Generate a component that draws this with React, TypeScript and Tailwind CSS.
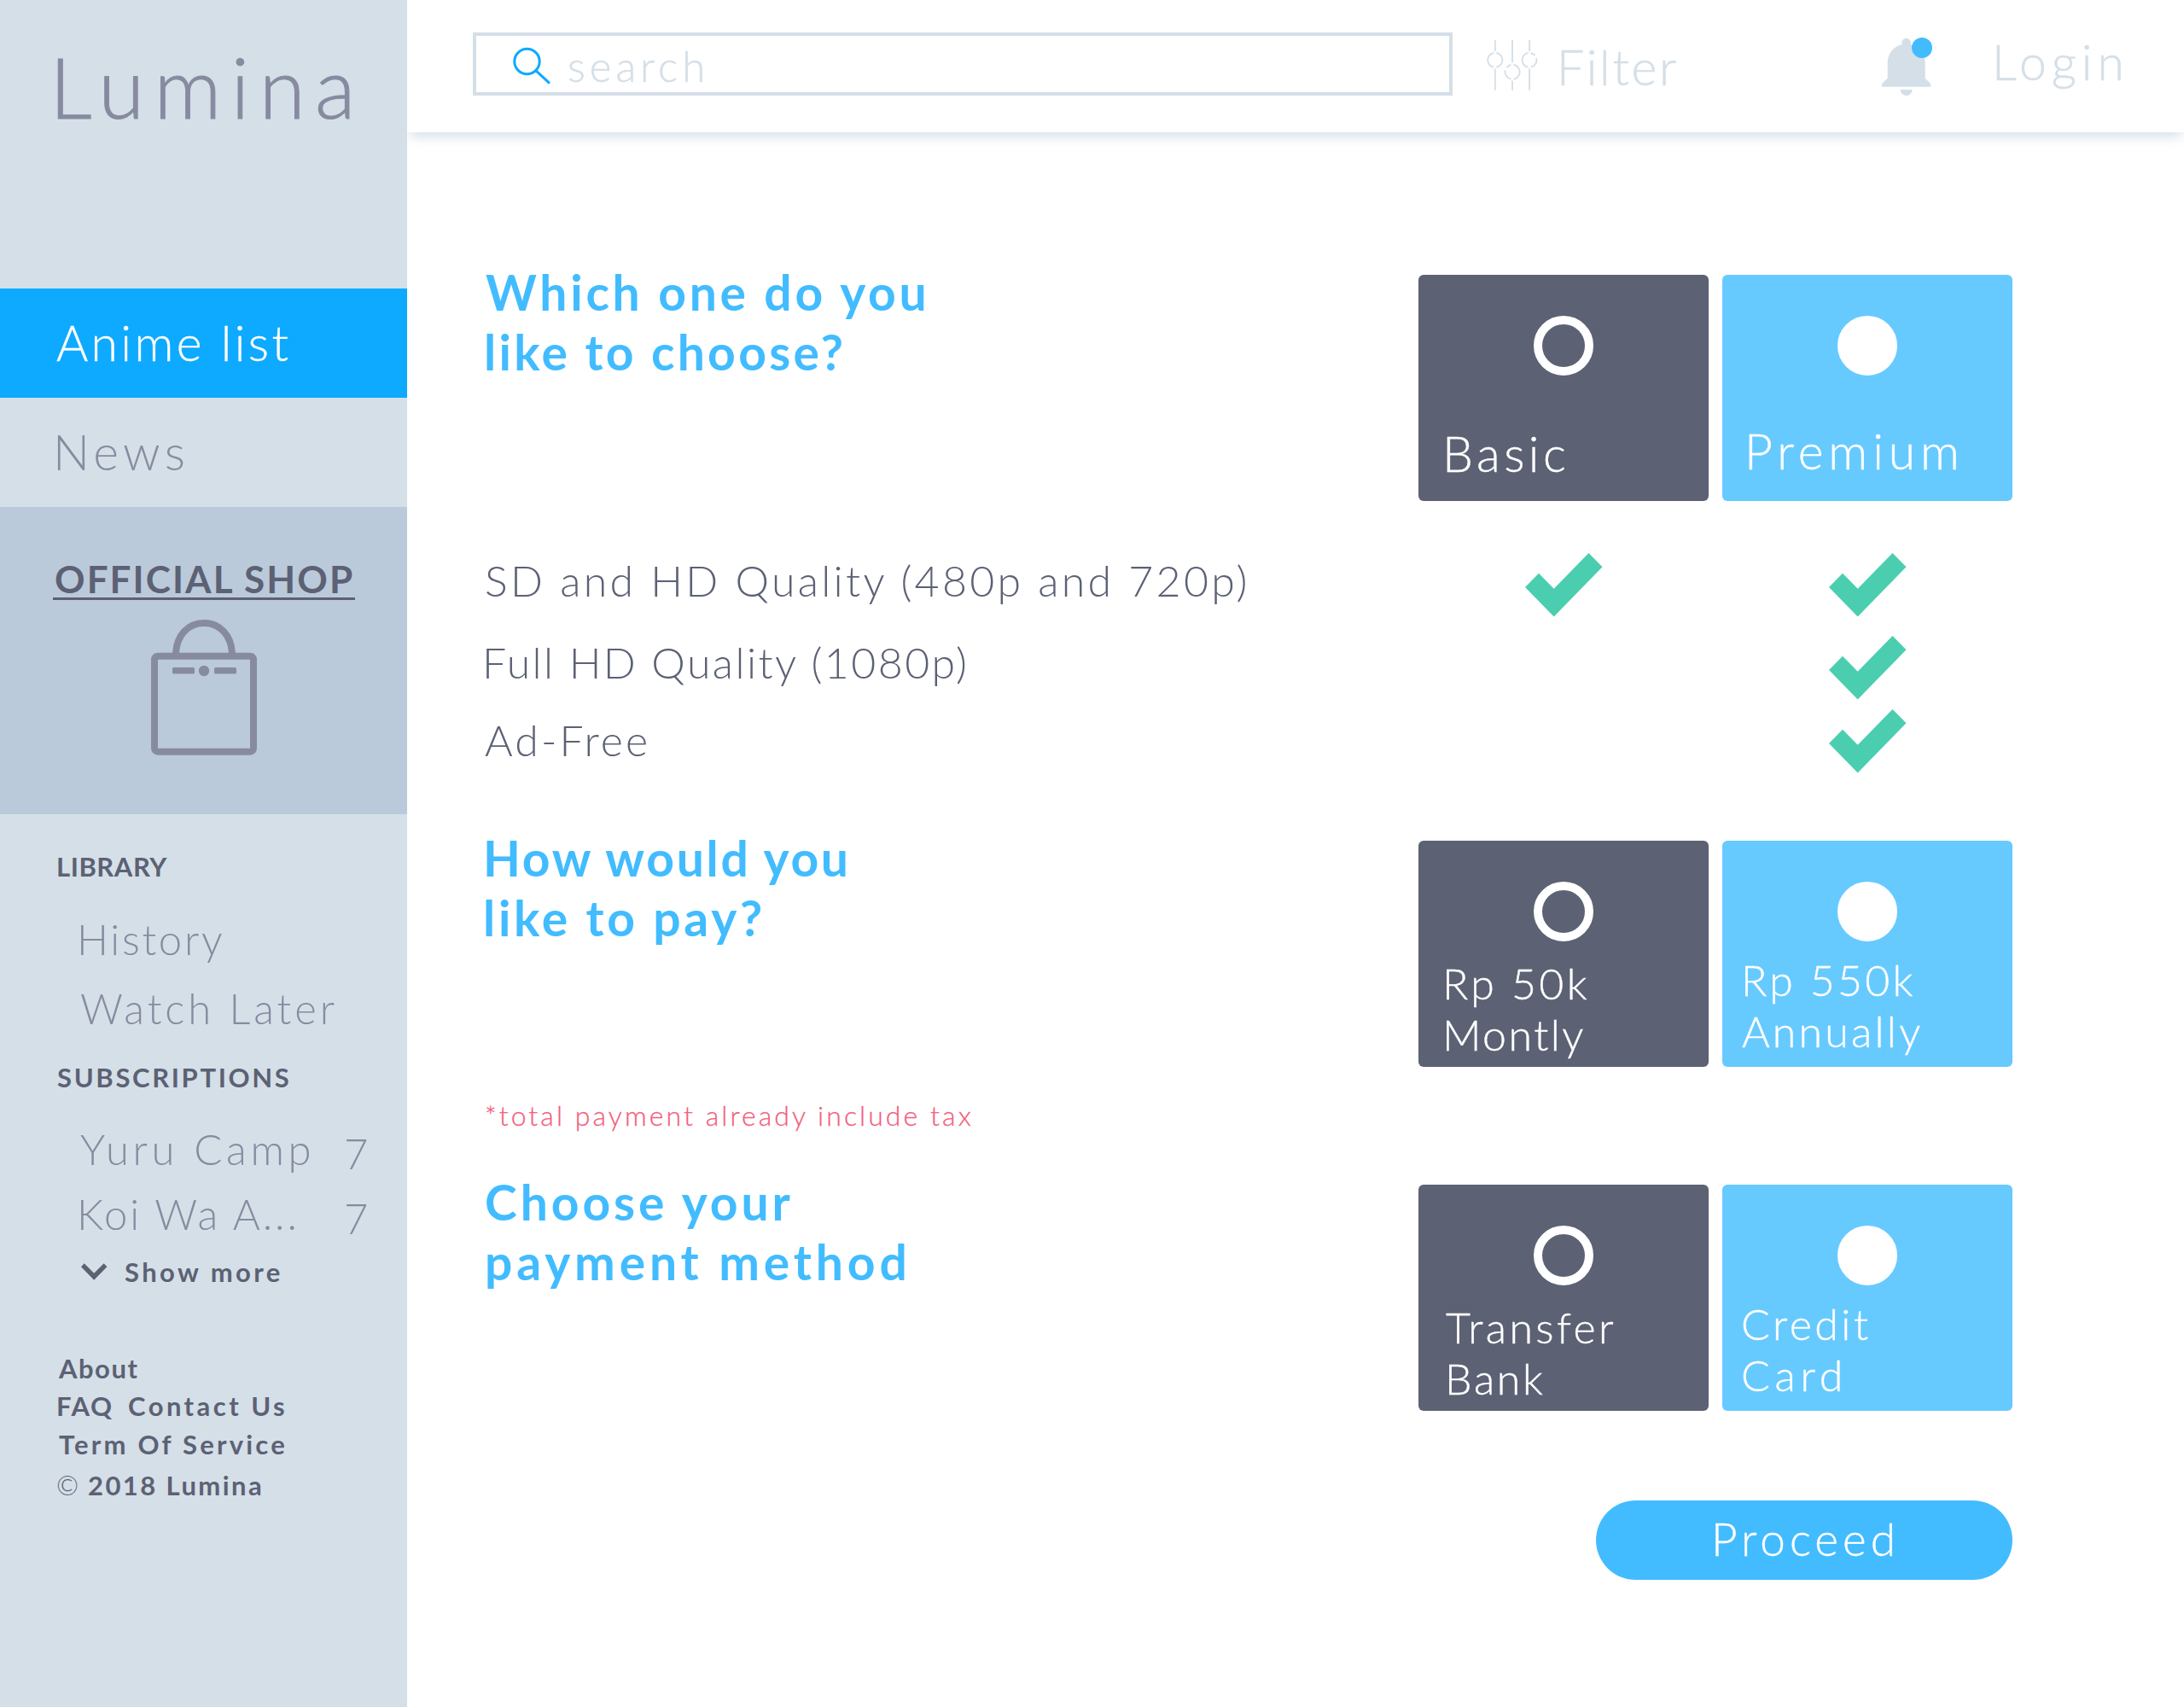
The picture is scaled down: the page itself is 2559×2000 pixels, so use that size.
import React from "react";

function SearchIcon() {
  return (
    <svg className="mt-[12px] h-[48px] w-[48px] shrink-0" viewBox="0 0 48 48" fill="none" stroke="#0daaff" strokeWidth="3">
      <circle cx="17.500" cy="18" r="14.700" />
      <path d="M27.800 28.600 44 43.600" />
    </svg>
  );
}

function FilterIcon() {
  return (
    <svg className="mt-[45px] ml-[38px] h-[64px] w-[66px] shrink-0" viewBox="0 0 66 64" fill="none" stroke="#d5dfe8" strokeWidth="1.900">
      <path d="M11.800 2v13M11.800 35.500v25.300M32 2v26.500M32 49.500v11.300M52.100 2v13M52.100 35.500v25.300" />
      <path d="M10.300 17a8.400 8.400 0 0 0 0 16.600M13.300 17a8.400 8.400 0 0 1 0 16.600" />
      <path d="M30.500 31a8.400 8.400 0 0 0-5 3.200M23.700 37.500a8.400 8.400 0 0 0 6.800 10.100M33.500 31a8.400 8.400 0 0 1 0 16.600" />
      <path d="M50.600 17a8.400 8.400 0 0 0 0 16.600M53.600 17a8.400 8.400 0 0 1 4.800 2.900M60.200 23a8.400 8.400 0 0 1-6.600 10.600" />
    </svg>
  );
}

function BellIcon() {
  return (
    <svg className="mt-[40px] h-[75px] w-[70px] shrink-0" viewBox="0 0 70 75">
      <path
        fill="#d5dfe8"
        d="M28.400 12.300V10a5.300 5.300 0 0 1 10.600 0v2.300C49 14.500 55.700 23 55.700 34v17.700L62 58v3.700H5V58l6.700-6.300V34C11.700 23 18.400 14.500 28.400 12.300ZM26.700 65h14a7 7 0 0 1-14 0Z"
      />
      <circle cx="52" cy="16" r="12" fill="#42bcff" />
    </svg>
  );
}

function BagIcon() {
  return (
    <svg className="mt-[23px] ml-[177px] h-[159px] w-[124px]" viewBox="0 0 124 159" fill="none" stroke="#878ba0" strokeWidth="8">
      <rect x="4" y="42.700" width="116" height="112" rx="4" />
      <path d="M29 42C29 18 44 4 62 4S95 18 95 42" />
      <g fill="#878ba0" stroke="none">
        <rect x="25" y="56" width="26" height="7.600" rx="1.500" />
        <rect x="74" y="56" width="26" height="7.600" rx="1.500" />
        <circle cx="62" cy="60" r="6.200" />
      </g>
    </svg>
  );
}

function Check() {
  return (
    <svg className="h-[75px] w-[91px]" viewBox="0 0 91 75" fill="#4bceb0">
      <path d="M0 40 16 23.700 33.700 41.700 74.500 0 90.500 16.300 33.700 74.600Z" />
    </svg>
  );
}

type Line = { text: string; className: string };

function Heading({ lines }: { lines: Line[] }) {
  return (
    <h2 className="-mt-[15px] text-[57px] leading-[70px] font-bold text-[#42bcff]">
      {lines.map((l) => (
        <span key={l.text} className={`block ${l.className}`}>{l.text}</span>
      ))}
    </h2>
  );
}

function Card({ selected, className, lines }: { selected?: boolean; className: string; lines: Line[] }) {
  return (
    <button className={`flex h-[265px] w-[340px] flex-col rounded-[6px] text-left leading-[60px] font-light text-white ${selected ? "bg-[#67caff]" : "bg-[#5c6174]"}`}>
      <span className={`mt-[48px] block h-[70px] w-[70px] self-center rounded-full border-[10px] border-white ${selected ? "bg-white" : ""}`} />
      <span className={`block [-webkit-text-stroke:0.4px_currentColor] ${className}`}>
        {lines.map((l) => (
          <span key={l.text} className={`block ${l.className}`}>{l.text}</span>
        ))}
      </span>
    </button>
  );
}

function Feature({ text, className, textClass, basic }: { text: string; className: string; textClass: string; basic?: boolean }) {
  return (
    <div className={`flex h-[75px] ${className}`}>
      <p className={`w-[1093px] text-[50px] leading-[60px] font-light text-[#5c6174] ${textClass}`}>{text}</p>
      <div className="flex w-[340px] justify-center">{basic && <Check />}</div>
      <div className="ml-[16px] flex w-[340px] justify-center">
        <Check />
      </div>
    </div>
  );
}

function Sidebar() {
  return (
    <aside className="z-10 flex h-full w-[477px] shrink-0 flex-col bg-[#d5dfe8] text-[#878ba0]">
      <h1 className="h-[338px] pt-[51px] pl-[58px] text-[98px] leading-[100px] font-light tracking-[11.300px] [-webkit-text-stroke:1px_currentColor]">Lumina</h1>
      <a className="h-[128px] bg-[#0daaff] pl-[66px] text-[57px] leading-[126px] font-light tracking-[3.400px] text-white [-webkit-text-stroke:0.4px_currentColor]">Anime list</a>
      <a className="h-[128px] pl-[62px] text-[57px] leading-[126px] font-light tracking-[5.200px]">News</a>
      <section className="h-[360px] bg-[#bbcada] pt-[62px]">
        <a className="ml-[62px] block w-[354px] border-b-[3px] border-[#5c6174] pl-[2px] text-[44px] leading-[44px] font-bold tracking-[2.080px] whitespace-nowrap text-[#5c6174]">OFFICIAL SHOP</a>
        <BagIcon />
      </section>
      <h3 className="mt-[45px] ml-[66px] text-[31px] leading-[32px] font-bold tracking-[0.550px] text-[#5c6174]">LIBRARY</h3>
      <a className="mt-[39px] ml-[90px] text-[49px] leading-[60px] font-light tracking-[2.700px]">History</a>
      <a className="mt-[21px] ml-[94px] text-[49px] leading-[60px] font-light tracking-[3.930px]">Watch Later</a>
      <h3 className="mt-[35px] ml-[67px] text-[31px] leading-[32px] font-bold tracking-[2.650px] text-[#5c6174]">SUBSCRIPTIONS</h3>
      <div className="mt-[38px] flex h-[60px] text-[49px] leading-[60px] font-light">
        <span className="ml-[94px] w-[309px] tracking-[4.700px]">Yuru Camp</span>
        <span className="pt-[5px]">7</span>
      </div>
      <div className="mt-[16px] flex h-[60px] text-[49px] leading-[60px] font-light">
        <span className="ml-[90px] w-[313px] tracking-[2.900px]">Koi Wa A...</span>
        <span className="pt-[5px]">7</span>
      </div>
      <div className="mt-[22px] flex h-[32px] text-[31px] leading-[32px] font-bold text-[#5c6174]">
        <svg className="mt-[5px] ml-[94px] h-[22px] w-[32px]" viewBox="0 0 32 22" fill="#5c6174">
          <path d="M1 5.200 4.700 1.300 16.200 12.800 27.700 1.300 31.400 5.200 16.200 20.800Z" />
        </svg>
        <span className="ml-[20px] tracking-[3.410px]">Show more</span>
      </div>
      <footer className="flex flex-col text-[31px] leading-[32px] font-bold text-[#5c6174]">
        <a className="mt-[81px] ml-[69px] tracking-[1.500px]">About</a>
        <div className="mt-[12px] flex">
          <a className="ml-[66px] w-[84px] tracking-[1.700px]">FAQ</a>
          <a className="tracking-[3.450px]">Contact Us</a>
        </div>
        <a className="mt-[13px] ml-[69px] tracking-[3.200px]">Term Of Service</a>
        <div className="mt-[16px] flex">
          <span className="ml-[66px] w-[37px] font-light">©</span>
          <span className="tracking-[2.420px]">2018 Lumina</span>
        </div>
      </footer>
    </aside>
  );
}

function Header() {
  return (
    <header className="flex h-[155px] bg-white font-light text-[#d5dfe8] shadow-[0_8px_14px_-3px_#d5e0e9]">
      <div className="mt-[38px] ml-[77px] flex h-[74px] w-[1148px] border-[4px] border-[#d5dfe8] pl-[42px]">
        <SearchIcon />
        <span className="ml-[17px] text-[49px] leading-[70px] tracking-[5px] [-webkit-text-stroke:0.5px_currentColor]">search</span>
      </div>
      <FilterIcon />
      <span className="mt-[38px] ml-[18px] w-[376px] text-[57px] leading-[80px] tracking-[2.720px] [-webkit-text-stroke:0.5px_currentColor]">Filter</span>
      <BellIcon />
      <span className="mt-[32px] ml-[64px] text-[57px] leading-[80px] tracking-[6px] [-webkit-text-stroke:0.5px_currentColor]">Login</span>
    </header>
  );
}

export default function App() {
  return (
    <div className="flex h-[2000px] w-[2559px] overflow-hidden bg-white font-['Lato',sans-serif]">
      <Sidebar />
      <div className="flex min-w-0 flex-1 flex-col">
        <Header />
        <main className="ml-[92px] w-[1789px] pt-[167px]">
          <section className="flex">
            <div className="w-[1093px]">
              <Heading
                lines={[
                  { text: "Which one do you", className: "tracking-[3.760px]" },
                  { text: "like to choose?", className: "-ml-[2px] tracking-[3.300px]" },
                ]}
              />
            </div>
            <div className="flex gap-[16px]">
              <Card className="mt-[61px] ml-[28px] text-[57px]" lines={[{ text: "Basic", className: "tracking-[4.500px]" }]} />
              <Card selected className="mt-[58px] ml-[26px] text-[57px]" lines={[{ text: "Premium", className: "tracking-[5.920px]" }]} />
            </div>
          </section>

          <Feature className="mt-[61px]" textClass="pt-[2px] -ml-px mr-px tracking-[3.300px]" text="SD and HD Quality (480p and 720p)" basic />
          <Feature className="mt-[22px]" textClass="pt-px tracking-[2.450px] -ml-[4px] mr-[4px]" text="Full HD Quality (1080p)" />
          <Feature className="mt-[11px]" textClass="pt-[6px] -ml-px mr-px tracking-[3.070px]" text="Ad-Free" />

          <section className="mt-[79px] flex">
            <div className="w-[1093px]">
              <Heading
                lines={[
                  { text: "How would you", className: "-ml-[3px] tracking-[2.690px]" },
                  { text: "like to pay?", className: "-ml-[3px] tracking-[3.720px]" },
                ]}
              />
            </div>
            <div className="flex gap-[16px]">
              <Card
                className="mt-[19px] ml-[28px] text-[50px]"
                lines={[
                  { text: "Rp 50k", className: "tracking-[3.300px]" },
                  { text: "Montly", className: "tracking-[2.500px]" },
                ]}
              />
              <Card
                selected
                className="mt-[15px] ml-[22px] text-[50px]"
                lines={[
                  { text: "Rp 550k", className: "tracking-[3.220px]" },
                  { text: "Annually", className: "ml-px tracking-[3.250px]" },
                ]}
              />
            </div>
          </section>
          <p className="mt-[36px] -ml-px pt-px text-[32px] leading-[40px] font-light tracking-[3.070px] text-[#f2607d] [-webkit-text-stroke:0.3px_currentColor]">
            *total payment already include tax
          </p>

          <section className="mt-[61px] flex">
            <div className="w-[1093px]">
              <Heading
                lines={[
                  { text: "Choose your", className: "-ml-px tracking-[3.930px]" },
                  { text: "payment method", className: "-ml-px tracking-[4.840px]" },
                ]}
              />
            </div>
            <div className="flex gap-[16px]">
              <Card
                className="mt-[19px] ml-[31px] text-[50px]"
                lines={[
                  { text: "Transfer", className: "ml-px tracking-[3.400px]" },
                  { text: "Bank", className: "tracking-[2.710px]" },
                ]}
              />
              <Card
                selected
                className="mt-[15px] ml-[22px] text-[50px]"
                lines={[
                  { text: "Credit", className: "tracking-[3.480px]" },
                  { text: "Card", className: "tracking-[5.800px]" },
                ]}
              />
            </div>
          </section>

          <button className="mt-[105px] ml-[1301px] block h-[93px] w-[488px] rounded-full bg-[#42bcff] pb-[4px] pl-[135px] text-left text-[53px] leading-[85px] font-light tracking-[5px] text-white [-webkit-text-stroke:0.4px_currentColor]">
            Proceed
          </button>
        </main>
      </div>
    </div>
  );
}
